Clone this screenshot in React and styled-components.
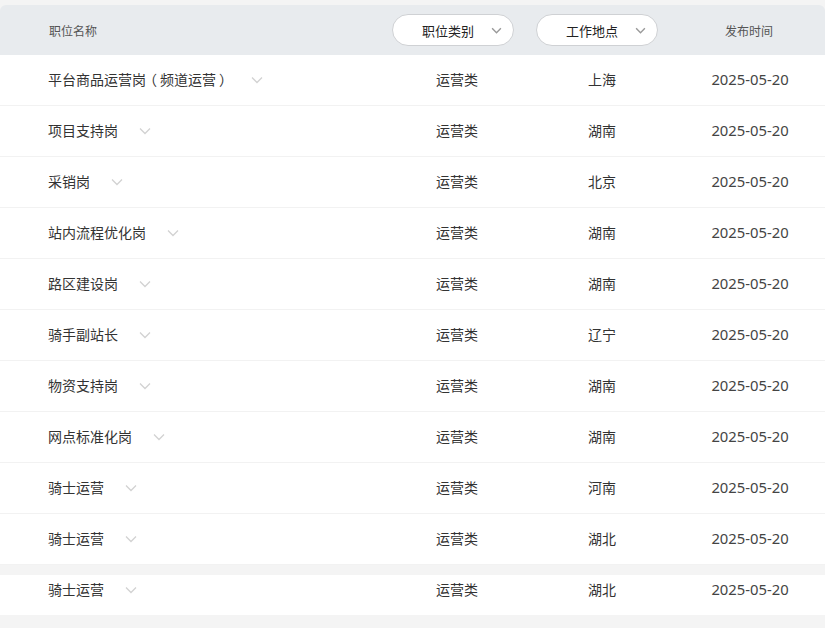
import React from "react";
import styled, { createGlobalStyle } from "styled-components";

const Global = createGlobalStyle`
  html, body { margin: 0; padding: 0; background: #f4f4f4; }
  body { font-family: "Noto Sans CJK SC", "Noto Sans", sans-serif; }
`;
const Page = styled.div`
  width: 825px;
  height: 628px;
  padding-top: 5px;
  box-sizing: border-box;
  overflow: hidden;
`;
const Columns = styled.div`
  display: grid;
  grid-template-columns: 392px 144px 144px 145px;
  align-items: center;
`;
const Header = styled(Columns)`
  height: 50px;
  background: #e8ebee;
  border-radius: 6px 6px 0 0;
  color: #555;
  font-size: 12px;
`;
const HeadName = styled.div`
  padding-left: 49px;
`;
const HeadDate = styled.div`
  text-align: center;
  padding-right: 7px;
`;
const Pill = styled.button`
  width: 122px;
  height: 32px;
  box-sizing: border-box;
  border: 1px solid #cfd1d4;
  border-radius: 16px;
  background: #fff;
  color: #222;
  font: 13px "Noto Sans CJK SC", sans-serif;
  display: flex;
  align-items: center;
  padding: 0 11px 0 29px;
  justify-content: space-between;
`;
const Row = styled(Columns)`
  height: ${p => (p.$last ? 40 : 50)}px;
  padding-bottom: ${p => (p.$last ? 10 : 0)}px;
  box-sizing: ${p => (p.$last ? "border-box" : "content-box")};
  background: #fff;
  color: #333;
  font-size: 14px;
  border-bottom: ${p => (p.$last ? "none" : "1px solid #f2f2f2")};
  margin-top: ${p => (p.$last ? 10 : 0)}px;
`;
const Name = styled.div`
  padding-left: 48px;
  display: flex;
  align-items: center;
  gap: 21px;
`;
const Title = styled.span`
  padding-bottom: 2px;
  white-space: nowrap;
  flex: none;
`;
const Paren = styled.span`
  display: inline-block;
  width: 14px;
  text-align: center;
  font-feature-settings: "palt";
`;
const Cell = styled.div`
  text-align: center;
  padding: 0 14px 2px 0;
`;
const PlaceCell = styled(Cell)`
  padding-right: 12px;
`;
const DateCell = styled.div`
  text-align: center;
  padding: 0 5px 2px 0;
  color: #444;
  font-family: "Noto Sans", sans-serif;
  font-size: 14.8px;
`;
const ChevronIcon = styled.svg`
  flex: none;
`;
const Chevron = ({ color = "#d2d2d2", w = 12, h = 8, sw = 1.3 }) => (
  <ChevronIcon width={w} height={h} viewBox="0 0 12 8" fill="none">
    <path d="M1 1.5 L6 6.5 L11 1.5" stroke={color} strokeWidth={sw} />
  </ChevronIcon>
);
const rows = [
  [<>平台商品运营岗<Paren>（</Paren>频道运营<Paren>）</Paren></>, "上海"],
  ["项目支持岗", "湖南"],
  ["采销岗", "北京"],
  ["站内流程优化岗", "湖南"],
  ["路区建设岗", "湖南"],
  ["骑手副站长", "辽宁"],
  ["物资支持岗", "湖南"],
  ["网点标准化岗", "湖南"],
  ["骑士运营", "河南"],
  ["骑士运营", "湖北"],
  ["骑士运营", "湖北"],
];
export default function App() {
  return (
    <Page>
      <Global />
      <Header>
        <HeadName>职位名称</HeadName>
        <div><Pill>职位类别<Chevron color="#999" w={11} h={7} sw={1.6} /></Pill></div>
        <div><Pill>工作地点<Chevron color="#999" w={11} h={7} sw={1.6} /></Pill></div>
        <HeadDate>发布时间</HeadDate>
      </Header>
      {rows.map(([n, l], i) => (
        <Row key={i} $last={i === 10}>
          <Name><Title>{n}</Title><Chevron /></Name>
          <Cell>运营类</Cell>
          <PlaceCell>{l}</PlaceCell>
          <DateCell>2025-05-20</DateCell>
        </Row>
      ))}
    </Page>
  );
}
